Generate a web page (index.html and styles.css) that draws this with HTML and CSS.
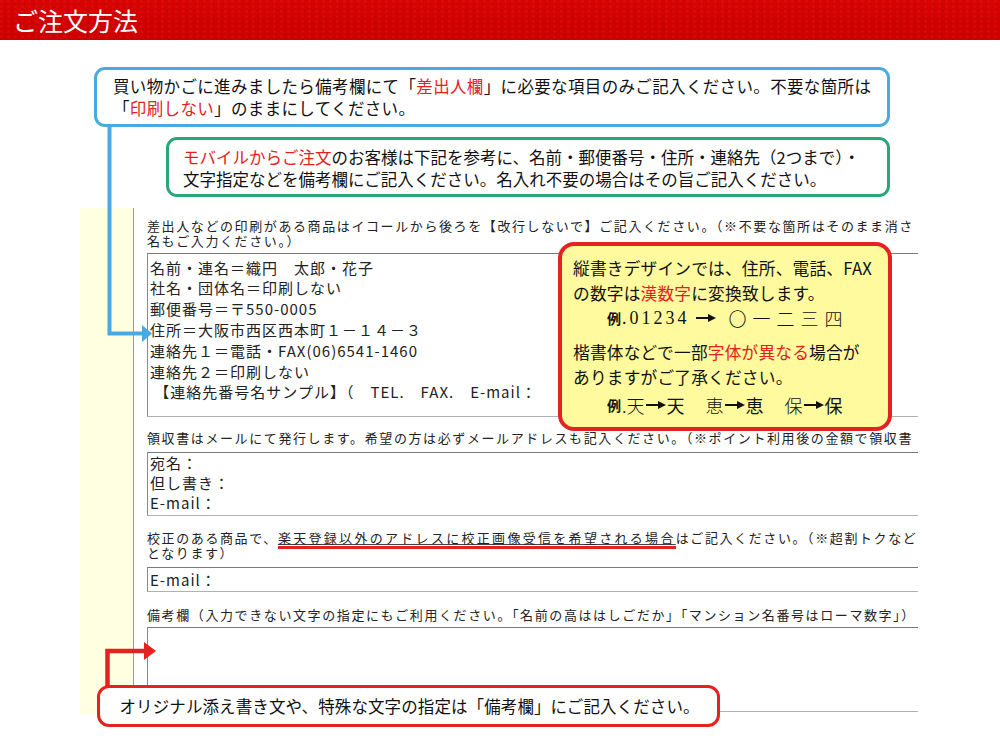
FILE: index.html
```html
<!DOCTYPE html>
<html lang="ja">
<head>
<meta charset="utf-8">
<title>ご注文方法</title>
<link rel="stylesheet" href="styles.css">
</head>
<body>
<div class="page">
  <header class="header"><h1 class="title">ご注文方法</h1></header>

  <div class="callout callout-blue">
    <p>買い物かごに進みましたら備考欄にて「<span class="red">差出人欄</span>」に必要な項目のみご記入ください。不要な箇所は</p>
    <p>「<span class="red">印刷しない</span>」のままにしてください。</p>
  </div>

  <div class="callout callout-green">
    <p><span class="red">モバイルからご注文</span>のお客様は下記を参考に、名前・郵便番号・住所・連絡先（2つまで）・</p>
    <p>文字指定などを備考欄にご記入ください。名入れ不要の場合はその旨ご記入ください。</p>
  </div>

  <div class="form">
    <div class="form-side"></div>
    <div class="form-body">
      <p class="label label-sender">差出人などの印刷がある商品はイコールから後ろを【改行しないで】ご記入ください。（※不要な箇所はそのまま消さ</p>
      <p class="label">名もご入力ください。）</p>
      <div class="box box-sender">
        <div>名前・連名＝織円　太郎・花子</div>
        <div>社名・団体名＝印刷しない</div>
        <div>郵便番号＝〒550-0005</div>
        <div>住所＝大阪市西区西本町１－１４－３</div>
        <div>連絡先１＝電話・FAX(06)6541-1460</div>
        <div>連絡先２＝印刷しない</div>
        <div>&nbsp;【連絡先番号名サンプル】（　TEL.　FAX.　E-mail：</div>
      </div>

      <p class="label label-receipt">領収書はメールにて発行します。希望の方は必ずメールアドレスも記入ください。（※ポイント利用後の金額で領収書</p>
      <div class="box box-receipt">
        <div>宛名：</div>
        <div>但し書き：</div>
        <div>E-mail：</div>
      </div>

      <p class="label label-proof">校正のある商品で、<span class="mark">楽天登録以外のアドレスに校正画像受信を希望される場合</span>はご記入ください。（※超割トクなど</p>
      <p class="label">となります）</p>
      <div class="box box-proof">
        <div>E-mail：</div>
      </div>

      <p class="label label-remarks">備考欄（入力できない文字の指定にもご利用ください。「名前の高ははしごだか」「マンション名番号はローマ数字」）</p>
      <div class="box box-remarks"></div>
    </div>
  </div>

  <svg class="connectors" width="1000" height="746" viewBox="0 0 1000 746" aria-hidden="true">
    <path d="M109.5 127 V333.5 H144" fill="none" stroke="#49a9e1" stroke-width="4"/>
    <polygon points="142,325 152,333.5 142,342" fill="#49a9e1"/>
    <path d="M107.5 688 V651 H146" fill="none" stroke="#e42320" stroke-width="4.5"/>
    <polygon points="144,642 156,651 144,660" fill="#e42320"/>
  </svg>

  <div class="note">
    <p>縦書きデザインでは、住所、電話、FAX</p>
    <p>の数字は<span class="red">漢数字</span>に変換致します。</p>
    <p class="example example-first"><span class="ex-label">例</span><span class="ex-digits">.01234</span><svg class="arrow" width="20" height="8" viewBox="0 0 20 8"><path d="M0 4 H13" stroke="#111" stroke-width="2"/><polygon points="12,0 20,4 12,8" fill="#111"/></svg><span class="ex-kanji ex-nums">〇一二三四</span></p>
    <p class="gap">楷書体などで一部<span class="red">字体が異なる</span>場合が</p>
    <p>ありますがご了承ください。</p>
    <p class="example example-last"><span class="ex-label">例</span><span class="ex-kanji ex-dot">.天</span><svg class="arrow" width="20" height="8" viewBox="0 0 20 8"><path d="M0 4 H13" stroke="#111" stroke-width="2"/><polygon points="12,0 20,4 12,8" fill="#111"/></svg><span class="ex-kanji ex-alt">天</span><span class="ex-kanji ex-group">恵</span><svg class="arrow" width="20" height="8" viewBox="0 0 20 8"><path d="M0 4 H13" stroke="#111" stroke-width="2"/><polygon points="12,0 20,4 12,8" fill="#111"/></svg><span class="ex-kanji ex-alt">恵</span><span class="ex-kanji ex-group">保</span><svg class="arrow" width="20" height="8" viewBox="0 0 20 8"><path d="M0 4 H13" stroke="#111" stroke-width="2"/><polygon points="12,0 20,4 12,8" fill="#111"/></svg><span class="ex-kanji ex-alt">保</span></p>
  </div>

  <div class="callout callout-bottom">
    <p>オリジナル添え書き文や、特殊な文字の指定は「備考欄」にご記入ください。</p>
  </div>
</div>
</body>
</html>
```

FILE: styles.css
```css
html, body {
  margin: 0;
  padding: 0;
  background: #fff;
}

.page {
  position: relative;
  width: 1000px;
  height: 746px;
  overflow: hidden;
  background: #fff;
  font-family: "Noto Sans CJK JP", "Noto Sans", sans-serif;
  color: #111;
}

.header {
  height: 40px;
  padding-left: 13px;
  background-color: #d10000;
  background-image:
    radial-gradient(circle at 20% 30%, rgba(255, 70, 70, 0.12) 0 1px, transparent 2px),
    radial-gradient(circle at 70% 80%, rgba(110, 0, 0, 0.10) 0 1px, transparent 2px),
    linear-gradient(180deg, #d70303 0%, #cd0000 100%);
  background-size: 7px 5px, 9px 6px, 100% 100%;
}

.title {
  margin: 0;
  font-size: 25px;
  font-weight: 400;
  line-height: 40px;
  color: #fff;
}

.red {
  color: #e4201f;
}

.callout {
  box-sizing: border-box;
  border: 3px solid;
  border-radius: 11px;
  font-size: 16.5px;
  line-height: 22px;
  color: #111;
  background: #fff;
}

.callout p {
  margin: 0;
  white-space: nowrap;
}

.callout-blue {
  margin: 27px 0 0 94px;
  width: 796px;
  height: 60px;
  padding: 5px 0 0 16px;
  border-color: #49a9e1;
  letter-spacing: 0.35px;
}

.callout-green {
  margin: 10px 0 0 166px;
  width: 724px;
  height: 60px;
  padding: 6px 0 0 14px;
  border-color: #2aa679;
}

.callout-bottom {
  position: absolute;
  left: 97px;
  top: 685px;
  width: 623px;
  height: 42px;
  padding: 6.5px 0 0 19.5px;
  border-width: 3.5px;
  border-radius: 12px;
  border-color: #e42320;
  letter-spacing: 0.1px;
}

/* form mock */
.form {
  display: flex;
  margin: 11px 0 0 80px;
  width: 838px;
  height: 507px;
  overflow: hidden;
}

.form-side {
  flex: none;
  width: 53px;
  background: #ffffe2;
  border-right: 1px solid #9a9a9a;
}

.form-body {
  flex: none;
  box-sizing: border-box;
  width: 900px;
  padding: 11px 0 0 13px;
  color: #222;
}

.label {
  margin: 0;
  font-family: "Liberation Sans", "Noto Sans CJK JP", sans-serif;
  font-size: 13px;
  line-height: 15px;
  letter-spacing: 1.6px;
  white-space: nowrap;
}

.label-receipt { margin-top: 13.5px; }
.label-proof { margin-top: 15px; }
.label-remarks { margin-top: 15.5px; }

.mark {
  letter-spacing: 2.3px;
  text-decoration: underline;
  text-decoration-color: #444;
  padding-bottom: 3px;
  background: linear-gradient(#e42320, #e42320) left bottom / 100% 3px no-repeat;
}

.box {
  box-sizing: border-box;
  border: 1px solid #b0b0b0;
  border-top-color: #7a7a7a;
  border-left-color: #8a8a8a;
  background: #fff;
  font-size: 15px;
  letter-spacing: 1px;
  line-height: 20px;
  padding-left: 2px;
  color: #222;
  white-space: nowrap;
}

.box-sender {
  margin-top: 4px;
  height: 164px;
  padding-top: 3.6px;
  line-height: 20.8px;
}

.box-receipt {
  margin-top: 6.5px;
  height: 64px;
}

.box-proof {
  margin-top: 6px;
  height: 25px;
  padding-top: 2px;
}

.box-remarks {
  margin-top: 4.5px;
  height: 85px;
}

.connectors {
  position: absolute;
  left: 0;
  top: 0;
  pointer-events: none;
}

/* yellow note */
.note {
  position: absolute;
  left: 558px;
  top: 242px;
  box-sizing: border-box;
  width: 334px;
  height: 189px;
  padding: 9.5px 0 0 11px;
  border: 4px solid #e42320;
  border-radius: 16px;
  background: #fffa9d;
  font-size: 16.7px;
  line-height: 25px;
  letter-spacing: 0.2px;
  color: #111;
}

.note p {
  margin: 0;
  white-space: nowrap;
}

.note .example {
  padding-left: 34px;
  display: flex;
  align-items: center;
  height: 25px;
  letter-spacing: 0;
}

.note .gap { margin-top: 9px; }
.note .example-last { margin-top: 3px; }

.ex-label {
  font-size: 14px;
  font-weight: 700;
}

.ex-digits {
  font-family: "Liberation Serif", serif;
  font-size: 18px;
  letter-spacing: 3px;
  margin-left: 1px;
}

.ex-kanji {
  font-size: 18px;
  font-weight: 300;
}

.ex-dot {
  margin-left: 1px;
}

.ex-nums {
  letter-spacing: 6px;
  margin-left: 12px;
}

.ex-alt {
  font-weight: 400;
}

.ex-group {
  margin-left: 21px;
}

.arrow {
  flex: none;
  margin: 0 1px;
}

.example-first .arrow {
  margin-left: 6px;
}
```
